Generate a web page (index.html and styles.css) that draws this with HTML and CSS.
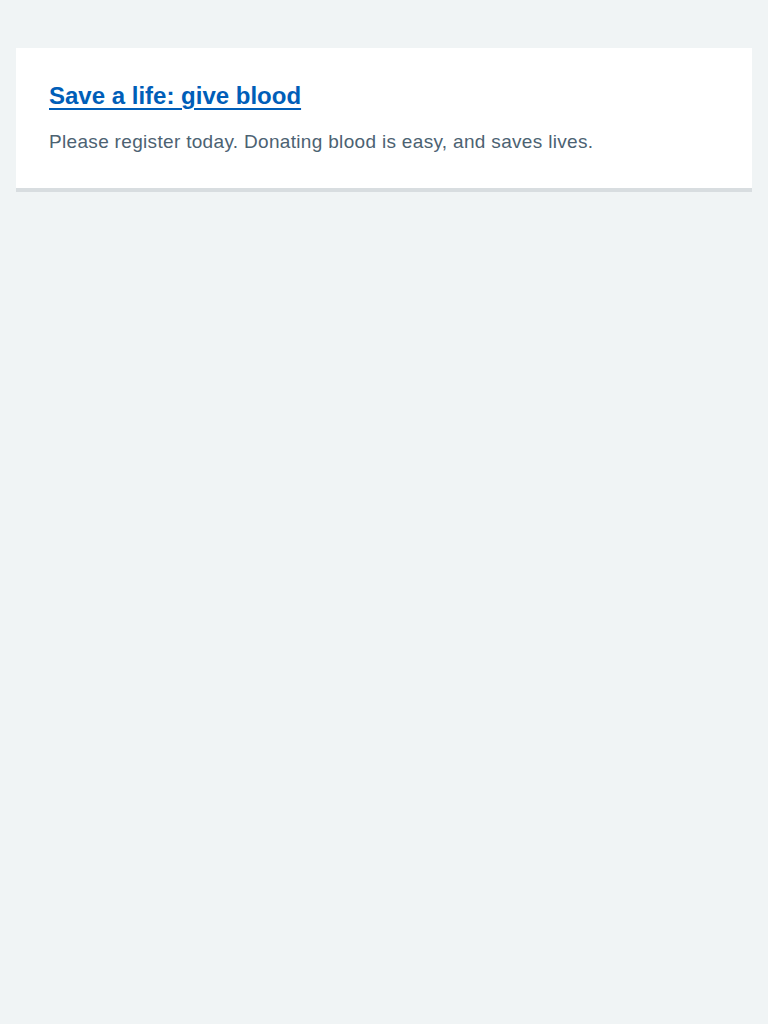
FILE: index.html
```html
<!DOCTYPE html>
<html lang="en">
<head>
<meta charset="utf-8">
<title>Card</title>
<link rel="stylesheet" href="styles.css">
</head>
<body>
<main class="page">
  <div class="card">
    <h2 class="card-heading"><a class="card-link" href="#">Save a life: give blood</a></h2>
    <p class="card-text">Please register today. Donating blood is easy, and saves lives.</p>
  </div>
</main>
</body>
</html>
```

FILE: styles.css
```css
html, body {
  margin: 0;
  padding: 0;
  background: #f0f4f5;
}
body {
  font-family: "Liberation Sans", Arial, sans-serif;
  color: #212b32;
}
.page {
  padding: 48px 16px;
}
.card {
  background: #ffffff;
  border-bottom: 4px solid #d8dde0;
  padding: 32px 32px 32px 33px;
}
.card-heading {
  margin: 0 0 16px;
  font-size: 24px;
  line-height: 32px;
  font-weight: 700;
}
.card-link {
  color: #005eb8;
  text-decoration: underline;
  text-underline-offset: 4px;
}
.card-text {
  margin: 0;
  font-size: 19px;
  line-height: 28px;
  letter-spacing: 0.32px;
  color: #4c6272;
}
```
